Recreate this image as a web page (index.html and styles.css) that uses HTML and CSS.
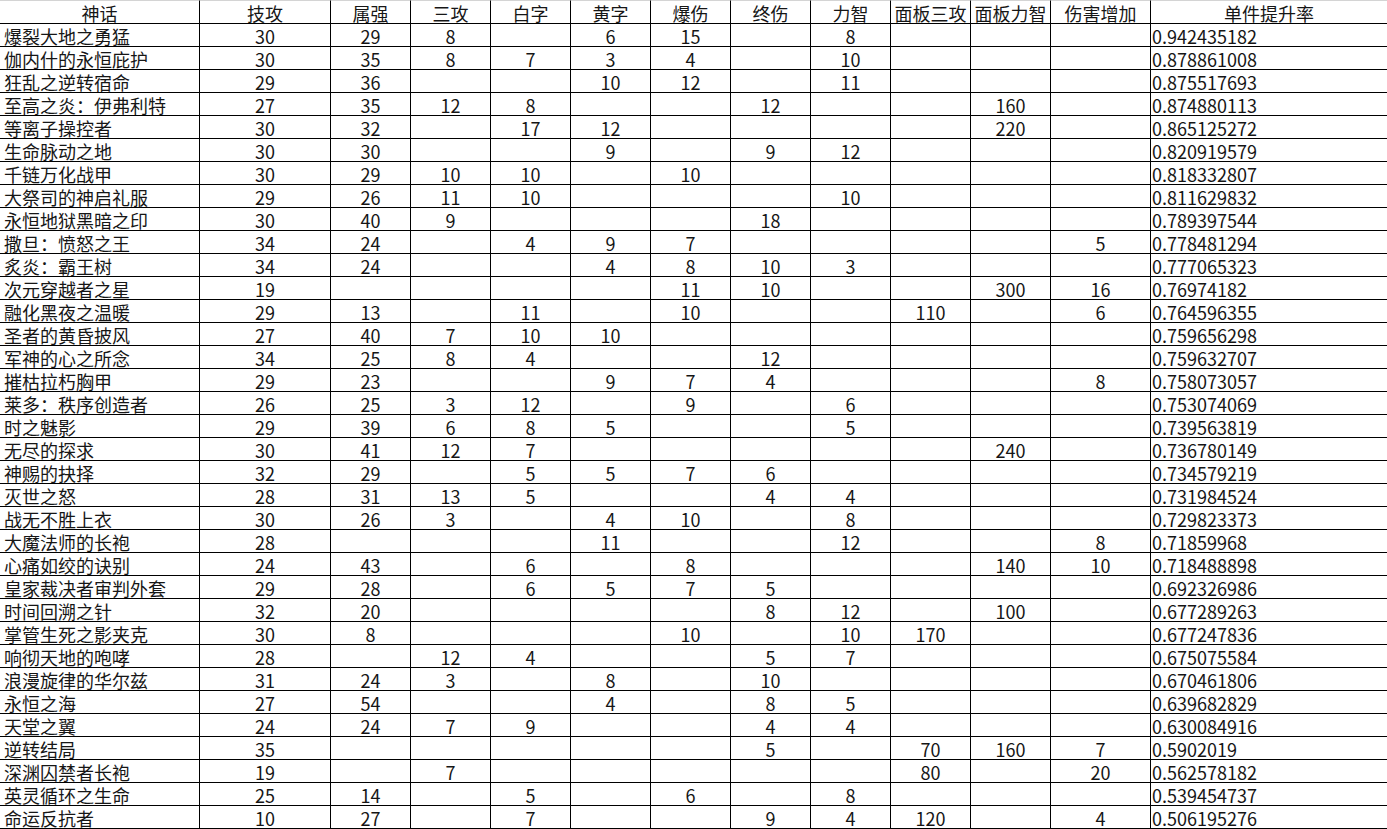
FILE: index.html
```html
<!DOCTYPE html>
<html lang="zh">
<head>
<meta charset="utf-8">
<title>神话</title>
<link rel="stylesheet" href="styles.css">
</head>
<body>
<table class="sheet">
<colgroup>
<col class="c-name"><col class="c-wide"><col class="c-std"><col class="c-std"><col class="c-std"><col class="c-std"><col class="c-std"><col class="c-std"><col class="c-std"><col class="c-std"><col class="c-std"><col class="c-dmg"><col class="c-rate">
</colgroup>
<thead>
<tr><th>神话</th><th>技攻</th><th>属强</th><th>三攻</th><th>白字</th><th>黄字</th><th>爆伤</th><th>终伤</th><th>力智</th><th>面板三攻</th><th>面板力智</th><th>伤害增加</th><th>单件提升率</th></tr>
</thead>
<tbody>
<tr><td class="name">爆裂大地之勇猛</td><td>30</td><td>29</td><td>8</td><td></td><td>6</td><td>15</td><td></td><td>8</td><td></td><td></td><td></td><td class="rate">0.942435182</td></tr>
<tr><td class="name">伽内什的永恒庇护</td><td>30</td><td>35</td><td>8</td><td>7</td><td>3</td><td>4</td><td></td><td>10</td><td></td><td></td><td></td><td class="rate">0.878861008</td></tr>
<tr><td class="name">狂乱之逆转宿命</td><td>29</td><td>36</td><td></td><td></td><td>10</td><td>12</td><td></td><td>11</td><td></td><td></td><td></td><td class="rate">0.875517693</td></tr>
<tr><td class="name">至高之炎：伊弗利特</td><td>27</td><td>35</td><td>12</td><td>8</td><td></td><td></td><td>12</td><td></td><td></td><td>160</td><td></td><td class="rate">0.874880113</td></tr>
<tr><td class="name">等离子操控者</td><td>30</td><td>32</td><td></td><td>17</td><td>12</td><td></td><td></td><td></td><td></td><td>220</td><td></td><td class="rate">0.865125272</td></tr>
<tr><td class="name">生命脉动之地</td><td>30</td><td>30</td><td></td><td></td><td>9</td><td></td><td>9</td><td>12</td><td></td><td></td><td></td><td class="rate">0.820919579</td></tr>
<tr><td class="name">千链万化战甲</td><td>30</td><td>29</td><td>10</td><td>10</td><td></td><td>10</td><td></td><td></td><td></td><td></td><td></td><td class="rate">0.818332807</td></tr>
<tr><td class="name">大祭司的神启礼服</td><td>29</td><td>26</td><td>11</td><td>10</td><td></td><td></td><td></td><td>10</td><td></td><td></td><td></td><td class="rate">0.811629832</td></tr>
<tr><td class="name">永恒地狱黑暗之印</td><td>30</td><td>40</td><td>9</td><td></td><td></td><td></td><td>18</td><td></td><td></td><td></td><td></td><td class="rate">0.789397544</td></tr>
<tr><td class="name">撒旦：愤怒之王</td><td>34</td><td>24</td><td></td><td>4</td><td>9</td><td>7</td><td></td><td></td><td></td><td></td><td>5</td><td class="rate">0.778481294</td></tr>
<tr><td class="name">炙炎：霸王树</td><td>34</td><td>24</td><td></td><td></td><td>4</td><td>8</td><td>10</td><td>3</td><td></td><td></td><td></td><td class="rate">0.777065323</td></tr>
<tr><td class="name">次元穿越者之星</td><td>19</td><td></td><td></td><td></td><td></td><td>11</td><td>10</td><td></td><td></td><td>300</td><td>16</td><td class="rate">0.76974182</td></tr>
<tr><td class="name">融化黑夜之温暖</td><td>29</td><td>13</td><td></td><td>11</td><td></td><td>10</td><td></td><td></td><td>110</td><td></td><td>6</td><td class="rate">0.764596355</td></tr>
<tr><td class="name">圣者的黄昏披风</td><td>27</td><td>40</td><td>7</td><td>10</td><td>10</td><td></td><td></td><td></td><td></td><td></td><td></td><td class="rate">0.759656298</td></tr>
<tr><td class="name">军神的心之所念</td><td>34</td><td>25</td><td>8</td><td>4</td><td></td><td></td><td>12</td><td></td><td></td><td></td><td></td><td class="rate">0.759632707</td></tr>
<tr><td class="name">摧枯拉朽胸甲</td><td>29</td><td>23</td><td></td><td></td><td>9</td><td>7</td><td>4</td><td></td><td></td><td></td><td>8</td><td class="rate">0.758073057</td></tr>
<tr><td class="name">莱多：秩序创造者</td><td>26</td><td>25</td><td>3</td><td>12</td><td></td><td>9</td><td></td><td>6</td><td></td><td></td><td></td><td class="rate">0.753074069</td></tr>
<tr><td class="name">时之魅影</td><td>29</td><td>39</td><td>6</td><td>8</td><td>5</td><td></td><td></td><td>5</td><td></td><td></td><td></td><td class="rate">0.739563819</td></tr>
<tr><td class="name">无尽的探求</td><td>30</td><td>41</td><td>12</td><td>7</td><td></td><td></td><td></td><td></td><td></td><td>240</td><td></td><td class="rate">0.736780149</td></tr>
<tr><td class="name">神赐的抉择</td><td>32</td><td>29</td><td></td><td>5</td><td>5</td><td>7</td><td>6</td><td></td><td></td><td></td><td></td><td class="rate">0.734579219</td></tr>
<tr><td class="name">灭世之怒</td><td>28</td><td>31</td><td>13</td><td>5</td><td></td><td></td><td>4</td><td>4</td><td></td><td></td><td></td><td class="rate">0.731984524</td></tr>
<tr><td class="name">战无不胜上衣</td><td>30</td><td>26</td><td>3</td><td></td><td>4</td><td>10</td><td></td><td>8</td><td></td><td></td><td></td><td class="rate">0.729823373</td></tr>
<tr><td class="name">大魔法师的长袍</td><td>28</td><td></td><td></td><td></td><td>11</td><td></td><td></td><td>12</td><td></td><td></td><td>8</td><td class="rate">0.71859968</td></tr>
<tr><td class="name">心痛如绞的诀别</td><td>24</td><td>43</td><td></td><td>6</td><td></td><td>8</td><td></td><td></td><td></td><td>140</td><td>10</td><td class="rate">0.718488898</td></tr>
<tr><td class="name">皇家裁决者审判外套</td><td>29</td><td>28</td><td></td><td>6</td><td>5</td><td>7</td><td>5</td><td></td><td></td><td></td><td></td><td class="rate">0.692326986</td></tr>
<tr><td class="name">时间回溯之针</td><td>32</td><td>20</td><td></td><td></td><td></td><td></td><td>8</td><td>12</td><td></td><td>100</td><td></td><td class="rate">0.677289263</td></tr>
<tr><td class="name">掌管生死之影夹克</td><td>30</td><td>8</td><td></td><td></td><td></td><td>10</td><td></td><td>10</td><td>170</td><td></td><td></td><td class="rate">0.677247836</td></tr>
<tr><td class="name">响彻天地的咆哮</td><td>28</td><td></td><td>12</td><td>4</td><td></td><td></td><td>5</td><td>7</td><td></td><td></td><td></td><td class="rate">0.675075584</td></tr>
<tr><td class="name">浪漫旋律的华尔兹</td><td>31</td><td>24</td><td>3</td><td></td><td>8</td><td></td><td>10</td><td></td><td></td><td></td><td></td><td class="rate">0.670461806</td></tr>
<tr><td class="name">永恒之海</td><td>27</td><td>54</td><td></td><td></td><td>4</td><td></td><td>8</td><td>5</td><td></td><td></td><td></td><td class="rate">0.639682829</td></tr>
<tr><td class="name">天堂之翼</td><td>24</td><td>24</td><td>7</td><td>9</td><td></td><td></td><td>4</td><td>4</td><td></td><td></td><td></td><td class="rate">0.630084916</td></tr>
<tr><td class="name">逆转结局</td><td>35</td><td></td><td></td><td></td><td></td><td></td><td>5</td><td></td><td>70</td><td>160</td><td>7</td><td class="rate">0.5902019</td></tr>
<tr><td class="name">深渊囚禁者长袍</td><td>19</td><td></td><td>7</td><td></td><td></td><td></td><td></td><td></td><td>80</td><td></td><td>20</td><td class="rate">0.562578182</td></tr>
<tr><td class="name">英灵循环之生命</td><td>25</td><td>14</td><td></td><td>5</td><td></td><td>6</td><td></td><td>8</td><td></td><td></td><td></td><td class="rate">0.539454737</td></tr>
<tr><td class="name">命运反抗者</td><td>10</td><td>27</td><td></td><td>7</td><td></td><td></td><td>9</td><td>4</td><td>120</td><td></td><td>4</td><td class="rate">0.506195276</td></tr>
</tbody>
</table>
</body>
</html>
```

FILE: styles.css
```css
html, body {
  margin: 0;
  padding: 0;
  background: #ffffff;
  overflow: hidden;
}

.sheet {
  border-collapse: separate;
  border-spacing: 0;
  table-layout: fixed;
  width: 1387px;
  font-family: "Noto Sans CJK SC", "Noto Sans", sans-serif;
  font-size: 18px;
  color: #161616;
}

.c-name { width: 200px; }
.c-wide { width: 131px; }
.c-std { width: 80px; }
.c-dmg { width: 100px; }
.c-rate { width: 236px; }

.sheet th,
.sheet td {
  box-sizing: content-box;
  height: 22px;
  padding: 0;
  border-right: 1px solid #000000;
  border-bottom: 1px solid #000000;
  font-weight: normal;
  text-align: center;
  vertical-align: bottom;
  line-height: 19px;
  white-space: nowrap;
}

.sheet th {
  border-top: 1px solid #d4d4d4;
}

.sheet th:last-child,
.sheet td:last-child {
  border-right: none;
}

.sheet td.name {
  text-align: left;
  padding-left: 4px;
}

.sheet td.rate {
  text-align: left;
  padding-left: 1px;
}
```
